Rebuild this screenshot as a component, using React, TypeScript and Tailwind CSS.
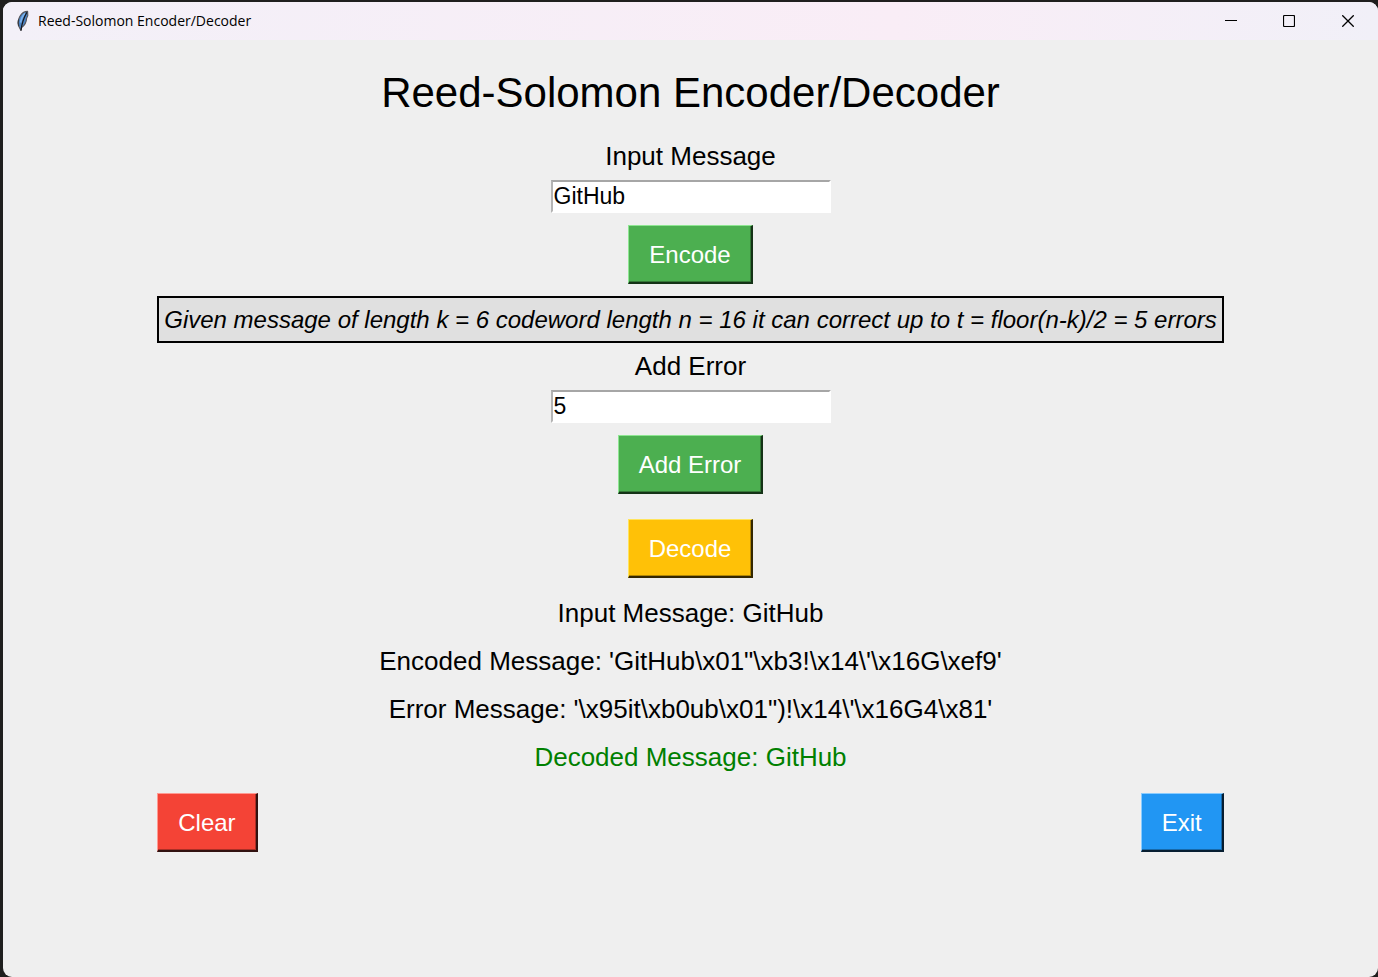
import { useState } from "react";
import type { ReactNode } from "react";

function FeatherIcon() {
  return (
    <svg viewBox="0 0 14 22" className="h-[22px] w-[14px]" aria-hidden="true">
      <path d="M12.6 1.4C9.4 1.4 6.6 3.4 4.8 6.6 3.4 9.4 2.6 12.6 3.4 15.4L5.8 20.2 6.8 17.4C9.6 15.4 11.4 12 11.6 8.4L12.8 5.6Z" fill="#4a83c4" stroke="#55565c" strokeWidth="1.1" strokeLinejoin="round" />
      <path d="M10.2 3.4C7.6 5.6 6.2 9 5.6 12.6" fill="none" stroke="#79b2ee" strokeWidth="1.8" />
      <path d="M3.6 9.6C3 12 3 14 3.8 16" fill="none" stroke="#3a3a3e" strokeWidth="1.2" />
      <path d="M11.8 2.4C8.6 8 6.8 12.4 6 20.8" fill="none" stroke="#17191f" strokeWidth="1.2" />
    </svg>
  );
}

function TitleBar() {
  const control = "flex h-[38px] items-center justify-center text-black";
  return (
    <header className="flex h-[38px] items-center bg-linear-to-r from-[#f3f0f8] via-[#f9edf6] via-65% to-[#f1f0f8] pl-3">
      <FeatherIcon />
      <span className="ml-[9px] grow font-['Open_Sans',sans-serif] text-[14px] leading-5 text-black">
        Reed-Solomon Encoder/Decoder
      </span>
      <button type="button" aria-label="Minimize" className={control + " w-[58px]"}>
        <svg viewBox="0 0 12 12" className="size-3" shapeRendering="crispEdges">
          <path d="M0 5.5H12" stroke="currentColor" />
        </svg>
      </button>
      <button type="button" aria-label="Maximize" className={control + " w-[58px]"}>
        <svg viewBox="0 0 12 12" className="size-3">
          <rect x="0.5" y="0.5" width="11" height="11" rx="1" fill="none" stroke="currentColor" strokeWidth="1.2" />
        </svg>
      </button>
      <button type="button" aria-label="Close" className={control + " w-[60px]"}>
        <svg viewBox="0 0 12 12" className="size-3">
          <path d="M0.3 0.3 11.7 11.7M11.7 0.3 0.3 11.7" stroke="currentColor" strokeWidth="1.3" />
        </svg>
      </button>
    </header>
  );
}

const tones = {
  green: "bg-[#4caf50] border-t-[#8ee692] border-l-[#8ee692] border-r-[#153317] border-b-[#153317] shadow-[inset_-1px_-1px_0_#357a38]",
  amber: "bg-[#ffc107] border-t-[#ffe45c] border-l-[#ffe45c] border-r-[#332701] border-b-[#332701] shadow-[inset_-1px_-1px_0_#b28705]",
  red: "bg-[#f44336] border-t-[#ff9a92] border-l-[#ff9a92] border-r-[#311210] border-b-[#311210] shadow-[inset_-1px_-1px_0_#ab2f26]",
  blue: "bg-[#2196f3] border-t-[#8accff] border-l-[#8accff] border-r-[#071e31] border-b-[#071e31] shadow-[inset_-1px_-1px_0_#1769aa]",
};

function RaisedButton({ tone, onClick, children }: { tone: keyof typeof tones; onClick?: () => void; children: ReactNode }) {
  return (
    <button
      type="button"
      onClick={onClick}
      className={"h-[59px] border-t border-r-2 border-b-2 border-l px-5 pt-[2px] text-[24px] leading-7 text-white " + tones[tone]}
    >
      {children}
    </button>
  );
}

function Field({ id, label, value, onChange }: { id: string; label: string; value: string; onChange: (v: string) => void }) {
  return (
    <>
      <label htmlFor={id} className="text-[26px] leading-7">{label}</label>
      <input
        id={id}
        type="text"
        value={value}
        onChange={(e) => onChange(e.target.value)}
        className="mt-[10px] mb-3 h-[33px] w-[280px] border-2 border-t-[#a6a6a6] border-r-white border-b-white border-l-[#b4b4b4] bg-white px-px text-[23px] leading-7 outline-none"
      />
    </>
  );
}

export default function App() {
  const [message, setMessage] = useState("GitHub");
  const [errors, setErrors] = useState("5");

  return (
    <div className="min-h-screen bg-[#1f1f1e] pt-[2px] pl-[3px]">
      <div className="flex min-h-[calc(100vh-2px)] flex-col overflow-hidden rounded-[9px] bg-[#efefef]">
        <TitleBar />
        <main className="mx-auto flex w-fit flex-col items-center pt-7 font-['Liberation_Sans',Arial,sans-serif] text-black">
          <h1 className="mb-6 text-[42px] leading-[50px]">Reed-Solomon Encoder/Decoder</h1>

          <Field id="message" label="Input Message" value={message} onChange={setMessage} />
          <RaisedButton tone="green">Encode</RaisedButton>

          <p className="mt-3 mb-[9px] border-2 border-black bg-[#e0e0e0] px-[5px] py-2 text-[24px] leading-[27px] whitespace-nowrap italic">
            Given message of length k = 6 codeword length n = 16 it can correct up to t = floor(n-k)/2 = 5 errors
          </p>

          <Field id="errors" label="Add Error" value={errors} onChange={setErrors} />
          <RaisedButton tone="green">Add Error</RaisedButton>

          <div className="mt-[25px] mb-5">
            <RaisedButton tone="amber">Decode</RaisedButton>
          </div>

          <div className="flex flex-col items-center gap-[18px] text-[26px] leading-[30px]">
            <p>Input Message: GitHub</p>
            <p>{"Encoded Message: 'GitHub\\x01\"\\xb3!\\x14\\'\\x16G\\xef9'"}</p>
            <p>{"Error Message: '\\x95it\\xb0ub\\x01\")!\\x14\\'\\x16G4\\x81'"}</p>
            <p className="text-[#008000]">Decoded Message: GitHub</p>
          </div>

          <div className="mt-[21px] flex justify-between self-stretch">
            <RaisedButton tone="red" onClick={() => { setMessage(""); setErrors(""); }}>Clear</RaisedButton>
            <RaisedButton tone="blue">Exit</RaisedButton>
          </div>
        </main>
      </div>
    </div>
  );
}
